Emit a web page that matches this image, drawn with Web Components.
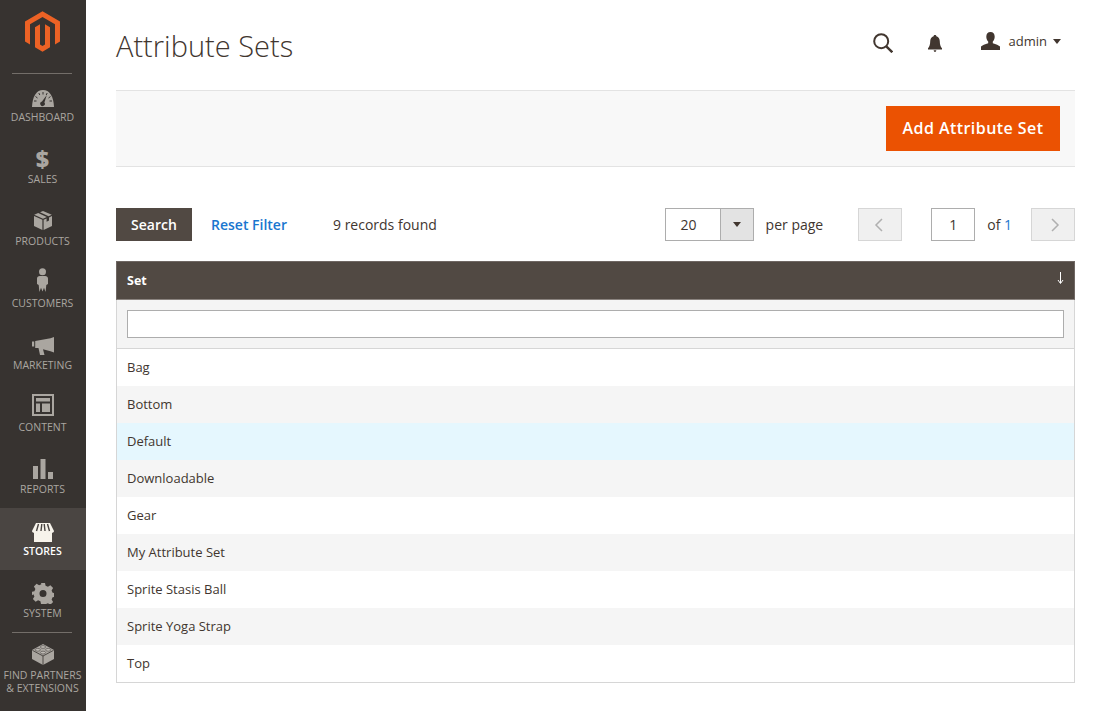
<!DOCTYPE html>
<html>
<head>
<meta charset="utf-8">
<title>Attribute Sets</title>
<style>
  html, body { margin: 0; height: 100%; background: #fff; }
  body { font-family: "Open Sans", sans-serif; color: #41362f; overflow: hidden; }
  #page { display: flex; height: 711px; }
  #dollar { display: block; height: 20px; font-size: 23px; line-height: 20px; font-weight: 800; color: #aaa6a0; }
  svg { display: block; }
</style>
</head>
<body>
<div id="page">
  <admin-nav>
    <nav-item label="DASHBOARD"><svg viewBox="0 0 22 17" width="22" height="17"><path fill="#aaa6a0" d="M11 0C4.500 0 .5 6 0 17h22C21.500 6 17.500 0 11 0z"/><path fill="#373330" d="M14.800 5l-2.400 7.400a2.300 2.300 0 1 1-2.400-.9z"/><path stroke="#373330" stroke-width="1" d="M11 2v2.500M6.800 3l1 2M3.500 6.500l2 1.500M15.200 3l-1 2M18.500 6.500l-2 1.500M2 11h2.500M20 11h-2.500"/></svg></nav-item>
    <nav-item label="SALES"><span id="dollar">$</span></nav-item>
    <nav-item label="PRODUCTS" low><svg viewBox="0 0 18 19" width="18" height="19"><path fill="#aaa6a0" d="M9 0l8.800 3.700-3.200 1.500L6 1.300zM4.200 2.100L12.800 6 9 7.700.2 3.800zM0 5l8.400 3.800V19L0 15zM18 5v10l-8.400 4V8.800l3-1.300v3.200l2.400-1.100V6.400z"/></svg></nav-item>
    <nav-item label="CUSTOMERS" low><svg viewBox="0 0 11 24" width="11" height="24"><circle cx="5.500" cy="3.700" r="3.500" fill="#aaa6a0"/><path fill="#aaa6a0" d="M2.800 8h5.400C9.800 8 11 9 11 10.600v5.400l-1.700 1L8.600 24 7 19.800 5.500 23.500 4 19.800 2.400 24l-.7-7L0 16v-5.400C0 9 1.200 8 2.800 8z"/></svg></nav-item>
    <nav-item label="MARKETING"><svg viewBox="0 0 22 18" width="22" height="18"><path fill="#aaa6a0" d="M0 4.500h2.200v5H0zM3.200 4L18.500 1.300 22 0v15.500l-3.500-1.300L11 12.200 12.500 18H8L6.500 11H3.200z"/></svg></nav-item>
    <nav-item label="CONTENT" low><svg viewBox="0 0 22 22" width="22" height="22"><path fill="#aaa6a0" fill-rule="evenodd" d="M0 0h22v22H0zM2 2v18h18V2z"/><path fill="#aaa6a0" d="M4 4h14v3.500H4zM4 9.500h4V18H4zM10 9.500h8V18h-8z"/></svg></nav-item>
    <nav-item label="REPORTS"><svg viewBox="0 0 20 20" width="20" height="20"><path fill="#aaa6a0" d="M0 7h5v13H0zM7.500 0h5v20h-5zM15 13h5v7h-5z"/></svg></nav-item>
    <nav-item label="STORES" active high><svg viewBox="0 0 22 19" width="22" height="19"><path fill="#f7f3eb" d="M2 9h18v10H2z"/><path fill="#f7f3eb" d="M4 0h14l4 8c0 1-1 1.800-2 1.800H2C1 9.800 0 9 0 8z"/><path stroke="#4a4542" stroke-width="1.400" d="M6.500 1L4.500 8M9.800 1L9 8M12.200 1L13 8M15.500 1l2 7"/></svg></nav-item>
    <nav-item label="SYSTEM" high><svg viewBox="0 0 22 21" width="22" height="21"><path fill="#aaa6a0" fill-rule="evenodd" d="M9 0h4l.6 2.800 2.300 1 2.500-1.500 2.700 2.700-1.500 2.400 1 2.300 2.400.6v3.400l-2.400.6-1 2.300 1.500 2.400-2.700 2.700-2.500-1.500-2.300 1L13 21H9l-.6-2.800-2.300-1-2.500 1.500-2.700-2.700 1.500-2.400-1-2.300L0 12.200V8.800l2.400-.6 1-2.300L1.900 3.500 4.600.800l2.500 1.500 2.300-1zM11 7a3.500 3.500 0 1 0 0 7 3.500 3.500 0 0 0 0-7z"/></svg></nav-item>
    <nav-item label="FIND PARTNERS &amp; EXTENSIONS" partners><svg viewBox="0 0 22 21" width="22" height="21"><path fill="#aaa6a0" d="M11 0l11 6v9l-11 6L0 15V6z"/><path fill="none" stroke="#373330" stroke-width=".8" d="M11 21v-9L.4 6.300M11 12l10.600-5.700"/><g fill="#bdb9b3" stroke="#5c5854" stroke-width=".7"><ellipse cx="11" cy="3" rx="2.600" ry="1.400"/><ellipse cx="5.800" cy="5.800" rx="2.600" ry="1.400"/><ellipse cx="16.200" cy="5.800" rx="2.600" ry="1.400"/><ellipse cx="11" cy="8.600" rx="2.600" ry="1.400"/></g></svg></nav-item>
  </admin-nav>
  <page-main heading="Attribute Sets">
    <grid-toolbar records="9"></grid-toolbar>
    <set-grid>
      <set-row>Bag</set-row>
      <set-row even>Bottom</set-row>
      <set-row hover>Default</set-row>
      <set-row even>Downloadable</set-row>
      <set-row>Gear</set-row>
      <set-row even>My Attribute Set</set-row>
      <set-row>Sprite Stasis Ball</set-row>
      <set-row even>Sprite Yoga Strap</set-row>
      <set-row>Top</set-row>
    </set-grid>
  </page-main>
</div>

<script>
class AdminNav extends HTMLElement {
  constructor() {
    super();
    this.attachShadow({ mode: "open" });
    this.shadowRoot.innerHTML = `
      <style>
        :host {
          display: block;
          flex: 0 0 86px;
          width: 86px;
          height: 711px;
          background: #373330;
        }
        #logo {
          height: 74px;
          box-sizing: border-box;
          padding: 11px 0 0 25px;
          position: relative;
        }
        #logo::after {
          content: "";
          position: absolute;
          left: 12px;
          right: 14px;
          bottom: 0;
          height: 1px;
          background: #736e69;
        }
        svg { display: block; }
      </style>
      <div id="logo">
        <svg viewBox="1.600 0 20.800 24" width="35" height="41">
          <path fill="#ec6225" d="M12 24l-4.455-2.572v-12l2.970-1.715v12.001l1.485.902 1.485-.902V7.713l2.970 1.715v12L12 24zM22.391 6v12l-2.970 1.714V7.713L12 3.430 4.574 7.713v12L1.609 18V6L12 0l10.391 6z"/>
        </svg>
      </div>
      <slot></slot>
    `;
  }
}

class NavItem extends HTMLElement {
  constructor() {
    super();
    this.attachShadow({ mode: "open" });
    this.shadowRoot.innerHTML = `
      <style>
        :host {
          display: flex;
          flex-direction: column;
          align-items: center;
          height: 62px;
          box-sizing: border-box;
          padding-right: 1px;
          color: #aaa6a0;
          font-size: 10.5px;
          line-height: 13px;
          text-align: center;
          position: relative;
        }
        :host([active]) {
          background: #4a4542;
          color: #fff;
          font-weight: 600;
        }
        :host([partners]) { height: 79px; }
        :host([partners])::before {
          content: "";
          position: absolute;
          left: 12px;
          right: 14px;
          top: 0;
          height: 1px;
          background: #736e69;
        }
        #icon {
          flex: none;
          height: 37px;
          display: flex;
          align-items: flex-end;
          padding-bottom: 4px;
          box-sizing: border-box;
        }
        :host([low]) #icon { padding-bottom: 5px; }
        :host([high]) #icon { padding-bottom: 3px; }
      </style>
      <div id="icon"><slot></slot></div>
      <div id="label"></div>
    `;
    this.shadowRoot.querySelector("#label").textContent = this.getAttribute("label");
  }
}

class PageMain extends HTMLElement {
  constructor() {
    super();
    this.attachShadow({ mode: "open" });
    this.shadowRoot.innerHTML = `
      <style>
        :host {
          display: block;
          flex: 1;
          box-sizing: border-box;
          padding: 0 31px 0 30px;
        }
        header {
          height: 90px;
          display: flex;
          justify-content: space-between;
        }
        h1 {
          margin: 0;
          padding-top: 27px;
          font-size: 29px;
          line-height: 38px;
          font-weight: 300;
          color: #41362f;
        }
        #tools {
          display: flex;
          align-items: flex-start;
          padding-top: 32px;
          margin-right: 14px;
        }
        #search { margin: 1px 35px 0 0; display: block; }
        #bell { margin: 3px 39px 0 0; display: block; }
        #user { display: flex; align-items: center; height: 18px; font-size: 13px; color: #41362f; }
        #user svg { margin-right: 9px; display: block; }
        #caret {
          margin-left: 6px;
          border: 4px solid transparent;
          border-top: 5px solid #41362f;
          border-bottom: 0;
        }
        #actions {
          height: 75px;
          display: flex;
          justify-content: flex-end;
          align-items: center;
          padding-right: 15px;
          background: #f8f8f8;
          border-top: 1px solid #e3e3e3;
          border-bottom: 1px solid #e3e3e3;
        }
        button {
          width: 174px;
          height: 45px;
          border: 0;
          background: #eb5202;
          color: #fff;
          font: 600 16px "Open Sans", sans-serif;
          letter-spacing: .45px;
          padding: 0 0 2px;
        }
        #content { padding-top: 41px; }
      </style>
      <header>
        <h1></h1>
        <div id="tools">
          <svg id="search" viewBox="0 0 20 20" width="20" height="20"><circle cx="8.200" cy="8.200" r="7" fill="none" stroke="#41362f" stroke-width="2"/><path d="M13.300 13.300l6 6" stroke="#41362f" stroke-width="2.400"/></svg>
          <svg id="bell" viewBox="0 0 14 17" width="14" height="17"><path fill="#41362f" d="M7 0c.9 0 1.300.5 1.400 1.300C10.800 2 11.800 4 11.800 6.500c0 3 .7 5 2.200 6.800V14.500H0v-1.200C1.500 11.500 2.200 9.500 2.200 6.500 2.200 4 3.200 2 5.600 1.300 5.700.5 6.100 0 7 0zM5.700 15.300h2.600C8.300 16.200 7.700 17 7 17s-1.300-.8-1.300-1.700z"/></svg>
          <div id="user">
            <svg viewBox="0 0 19 18" width="19" height="18"><path fill="#41362f" d="M9.500 0c2.700 0 4.200 1.900 4.200 4.700 0 2.200-.9 3.800-1.900 4.800v1.700c3 1 6.200 1.900 7.200 3.400V18H0v-3.400c1-1.500 4.200-2.400 7.200-3.400V9.500c-1-1-1.900-2.600-1.900-4.800C5.300 1.900 6.800 0 9.500 0z"/></svg>
            admin
            <span id="caret"></span>
          </div>
        </div>
      </header>
      <div id="actions"><button>Add Attribute Set</button></div>
      <div id="content"><slot></slot></div>
    `;
    this.shadowRoot.querySelector("h1").textContent = this.getAttribute("heading");
  }
}

class GridToolbar extends HTMLElement {
  constructor() {
    super();
    this.attachShadow({ mode: "open" });
    this.shadowRoot.innerHTML = `
      <style>
        :host {
          display: flex;
          align-items: center;
          height: 33px;
          font-size: 14px;
          color: #41362f;
          margin-bottom: 20px;
        }
        #go {
          width: 76px;
          height: 33px;
          background: #514943;
          color: #fff;
          font-weight: 600;
          display: flex;
          align-items: center;
          justify-content: center;
        }
        a { color: #1a76cf; font-weight: 600; margin-left: 19px; text-decoration: none; }
        #count { margin-left: 46px; }
        #pager { margin-left: auto; display: flex; align-items: center; }
        #size {
          width: 87px;
          height: 31px;
          border: 1px solid #adadad;
          display: flex;
          align-items: center;
          background: #fff;
        }
        #size span { flex: 1; padding-left: 15px; }
        #size i {
          width: 32px;
          height: 31px;
          background: #e3e3e3;
          border-left: 1px solid #adadad;
          display: flex;
          align-items: center;
          justify-content: center;
        }
        #size i::after {
          content: "";
          border: 4px solid transparent;
          border-top: 5px solid #41362f;
          border-bottom: 0;
        }
        #per { margin: 0 35px 0 12px; }
        .nav {
          width: 42px;
          height: 31px;
          border: 1px solid #d6d6d6;
          background: #f0f0f0;
          display: flex;
          align-items: center;
          justify-content: center;
        }
        #prev svg { margin-right: 4px; }
        #next svg { margin-left: 4px; }
        #cur {
          width: 42px;
          height: 31px;
          border: 1px solid #adadad;
          margin-left: 29px;
          display: flex;
          align-items: center;
          justify-content: center;
        }
        #of { margin: 0 19px 0 12px; }
        #of b { font-weight: 400; color: #1a76cf; }
      </style>
      <div id="go">Search</div>
      <a href="#">Reset Filter</a>
      <div id="count"></div>
      <div id="pager">
        <div id="size"><span>20</span><i></i></div>
        <div id="per">per page</div>
        <div class="nav" id="prev"><svg viewBox="0 0 9 14" width="9" height="14"><path d="M8 1L2 7l6 6" fill="none" stroke="#b0b0b0" stroke-width="1.500"/></svg></div>
        <div id="cur">1</div>
        <div id="of">of <b>1</b></div>
        <div class="nav" id="next"><svg viewBox="0 0 9 14" width="9" height="14"><path d="M1 1l6 6-6 6" fill="none" stroke="#b0b0b0" stroke-width="1.500"/></svg></div>
      </div>
    `;
    this.shadowRoot.querySelector("#count").textContent = this.getAttribute("records") + " records found";
  }
}

class SetGrid extends HTMLElement {
  constructor() {
    super();
    this.attachShadow({ mode: "open" });
    this.shadowRoot.innerHTML = `
      <style>
        :host { display: block; }
        #head {
          height: 37px;
          background: #514943;
          border: 1px solid #8a837f;
          border-color: #6f6763 #6f6763 #8a837f;
          color: #fff;
          font-size: 12.500px;
          font-weight: 700;
          display: flex;
          justify-content: space-between;
          align-items: center;
          padding: 0 10px;
        }
        #arrow { display: block; margin-top: -6px; }
        #filter {
          height: 49px;
          box-sizing: border-box;
          background: #f4f4f4;
          border: 1px solid #d6d6d6;
          border-top: 0;
          padding: 10px;
        }
        #filter div {
          height: 26px;
          background: #fff;
          border: 1px solid #adadad;
        }
        #rows {
          border: 1px solid #d6d6d6;
          border-top: 0;
        }
      </style>
      <div id="head">
        <span>Set</span>
        <svg id="arrow" viewBox="0 0 7 12" width="7" height="12"><path d="M3.500 0v11M1 8l2.500 3.500L6 8" fill="none" stroke="#fff" stroke-width="1"/></svg>
      </div>
      <div id="filter"><div></div></div>
      <div id="rows"><slot></slot></div>
    `;
  }
}

class SetRow extends HTMLElement {
  constructor() {
    super();
    this.attachShadow({ mode: "open" });
    this.shadowRoot.innerHTML = `
      <style>
        :host {
          display: flex;
          align-items: center;
          height: 37px;
          box-sizing: border-box;
          padding: 0 0 2px 10px;
          font-size: 13px;
          color: #41362f;
          background: #fff;
        }
        :host([even]) { background: #f5f5f5; }
        :host([hover]) { background: #e5f7fe; }
      </style>
      <slot></slot>
    `;
  }
}

customElements.define("admin-nav", AdminNav);
customElements.define("nav-item", NavItem);
customElements.define("page-main", PageMain);
customElements.define("grid-toolbar", GridToolbar);
customElements.define("set-grid", SetGrid);
customElements.define("set-row", SetRow);
</script>
</body>
</html>
